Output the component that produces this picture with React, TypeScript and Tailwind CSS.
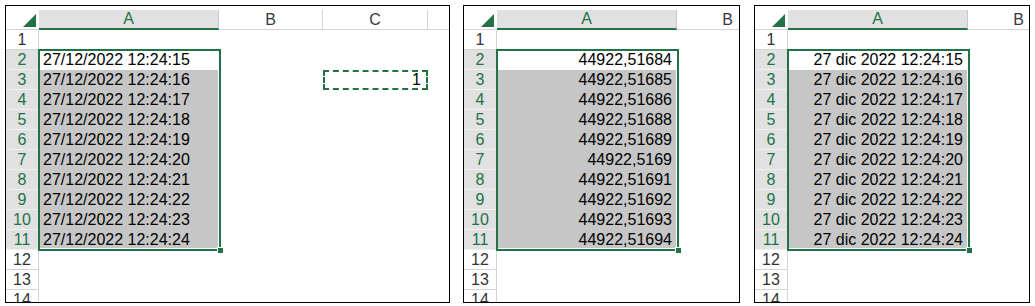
const GREEN = '#217346'

type Col = { label: string; w: number }

type Sheet = {
  width: number
  gap: string
  cols: Col[]
  values: string[]
  align: 'left' | 'right'
  marquee?: boolean
}

const stamps = ['15', '16', '17', '18', '19', '20', '21', '22', '23', '24']

const sheets: Sheet[] = [
  {
    width: 445,
    gap: 'ml-0',
    cols: [
      { label: 'A', w: 180 },
      { label: 'B', w: 104 },
      { label: 'C', w: 105 },
      { label: '', w: 40 },
    ],
    values: stamps.map((s) => `27/12/2022 12:24:${s}`),
    align: 'left',
    marquee: true,
  },
  {
    width: 277,
    gap: 'ml-[13px]',
    cols: [
      { label: 'A', w: 180 },
      { label: 'B', w: 102 },
    ],
    values: [
      '44922,51684',
      '44922,51685',
      '44922,51686',
      '44922,51688',
      '44922,51689',
      '44922,5169',
      '44922,51691',
      '44922,51692',
      '44922,51693',
      '44922,51694',
    ],
    align: 'right',
  },
  {
    width: 276,
    gap: 'ml-[14px]',
    cols: [
      { label: 'A', w: 180 },
      { label: 'B', w: 102 },
    ],
    values: stamps.map((s) => `27 dic 2022 12:24:${s}`),
    align: 'right',
  },
]

const rows = Array.from({ length: 14 }, (_, i) => i + 1)

function SelectAll() {
  return (
    <svg width="33" height="20" viewBox="0 0 33 20" className="block">
      <polygon points="17,17 30,17 30,4" fill={GREEN} />
    </svg>
  )
}

function SheetPanel({ sheet }: { sheet: Sheet }) {
  return (
    <div
      className={`relative h-[298px] shrink-0 overflow-hidden border border-black bg-white pt-[4px] ${sheet.gap}`}
      style={{ width: sheet.width }}
    >
      {/* column headers */}
      <div className="flex h-[20px]">
        <div className="w-[33px] shrink-0 border-b border-[#d4d4d4]">
          <SelectAll />
        </div>
        {sheet.cols.map((c) =>
          c.label === 'A' ? (
            <div
              key={c.label}
              className="flex h-[20px] shrink-0 items-center justify-center border-r border-b-2 border-r-[#c8c8c8] border-b-[#217346] bg-[#e1e1e1] text-[#217346]"
              style={{ width: c.w }}
            >
              {c.label}
            </div>
          ) : (
            <div
              key={c.label || 'x'}
              className="flex h-[20px] shrink-0 items-center justify-center border-r border-b border-[#d4d4d4] text-[#3a3a3a]"
              style={{ width: c.w }}
            >
              {c.label}
            </div>
          )
        )}
      </div>

      {/* rows */}
      {rows.map((r) => {
        const selected = r >= 2 && r <= 11
        const value = selected ? sheet.values[r - 2] : ''
        return (
          <div key={r} className="flex h-[20px]">
            <div
              className={
                selected
                  ? 'flex w-[33px] shrink-0 items-center justify-center border-r border-b border-r-[#d4d4d4] border-b-[#f0f0f0] bg-[#e1e1e1] text-[#217346]'
                  : 'flex w-[33px] shrink-0 items-center justify-center border-r border-b border-[#d4d4d4] text-[#333]'
              }
            >
              {r}
            </div>
            {sheet.cols.map((c, ci) => {
              if (ci === 0) {
                return (
                  <div
                    key={ci}
                    className={`flex h-[20px] shrink-0 items-center overflow-hidden whitespace-nowrap text-black ${
                      r >= 3 && r <= 11 ? 'bg-[#c6c6c6]' : 'bg-white'
                    } ${sheet.align === 'right' ? 'justify-end pr-[5px]' : 'justify-start pl-[4px]'}`}
                    style={{ width: c.w }}
                  >
                    {value}
                  </div>
                )
              }
              if (sheet.marquee && c.label === 'C' && r === 3) {
                return (
                  <div
                    key={ci}
                    className="flex h-[20px] shrink-0 items-center justify-end border-2 border-dashed border-[#217346] pr-[5px] text-black"
                    style={{ width: c.w }}
                  >
                    1
                  </div>
                )
              }
              return <div key={ci} className="h-[20px] shrink-0" style={{ width: c.w }} />
            })}
          </div>
        )
      })}

      {/* selection outline A2:A11 */}
      <div className="pointer-events-none absolute left-[32px] top-[43px] h-[202px] w-[183px] border-2 border-[#217346] shadow-[inset_-1px_-1px_0_#ffffff]" />
      <div className="absolute left-[211px] top-[241px] h-[7px] w-[7px] border border-white bg-[#217346]" />
    </div>
  )
}

export default function App() {
  return (
    <div
      className="flex h-[306px] w-[1035px] bg-white pl-[5px] pt-[5px] text-[16px] leading-[20px]"
      style={{ fontFamily: '"Liberation Sans", Arial, sans-serif' }}
    >
      {sheets.map((s, i) => (
        <SheetPanel key={i} sheet={s} />
      ))}
    </div>
  )
}
